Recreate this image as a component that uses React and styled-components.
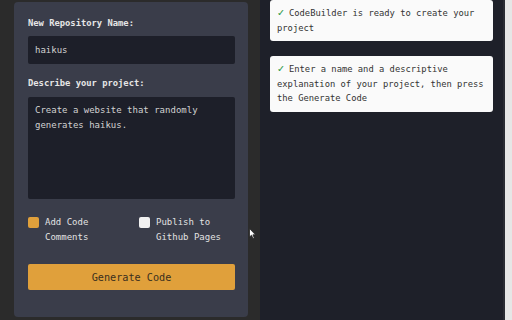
import React from 'react';
import styled, { createGlobalStyle } from 'styled-components';

const GlobalStyle = createGlobalStyle`
    html, body {
        margin: 0;
        padding: 0;
        width: 512px;
        height: 320px;
        overflow: hidden;
        background: #2b2b2b;
        font-family: "DejaVu Sans Mono", "Liberation Mono", monospace;
    }
`;

const Page = styled.div`
    position: relative;
    display: flex;
    width: 512px;
    height: 320px;
    padding-left: 14px;
    box-sizing: border-box;
    gap: 12px;
`;

const FormPanel = styled.div`
    width: 234px;
    margin: 2px 0 3px;
    padding: 14px 13px 0 14px;
    box-sizing: border-box;
    background: #3a3d4a;
    border-radius: 4px;
    display: flex;
    flex-direction: column;
`;

const Label = styled.label`
    font-size: 8.8px;
    line-height: 14px;
    font-weight: bold;
    color: #e6e6e6;
    margin-top: ${(p) => p.$top || 0}px;
`;

const fieldStyles = `
    width: 100%;
    box-sizing: border-box;
    border: none;
    outline: none;
    background: #1d1f29;
    color: #d2d2d2;
    font-family: "DejaVu Sans Mono", "Liberation Mono", monospace;
    font-size: 9px;
    border-radius: 2px;
    padding: 0 7px;
`;

const TextInput = styled.input`
    ${fieldStyles}
    height: 28px;
    margin-top: 6px;
`;

const TextArea = styled.textarea`
    ${fieldStyles}
    height: 102px;
    margin-top: 7px;
    padding-top: 6px;
    line-height: 15px;
    resize: none;
    overflow: hidden;
`;

const Options = styled.div`
    display: flex;
    margin-top: 16px;
`;

const Option = styled.div`
    display: flex;
    align-items: flex-start;
    gap: 6px;
    width: ${(p) => p.$width}px;
`;

const Box = styled.span`
    flex: none;
    width: 11px;
    height: 11px;
    margin-top: 2px;
    border-radius: 2px;
    background: ${(p) => (p.$checked ? '#e0a03b' : '#f1f1f1')};
`;

const OptionText = styled.span`
    width: 72px;
    font-size: 9px;
    line-height: 15px;
    color: #e2e2e2;
`;

const GenerateButton = styled.button`
    margin-top: 19px;
    height: 26px;
    width: 100%;
    border: none;
    border-radius: 2px;
    background: #e0a03b;
    color: #3a2f1e;
    font-family: "DejaVu Sans Mono", "Liberation Mono", monospace;
    font-size: 10.2px;
    cursor: pointer;
`;

const LogPanel = styled.div`
    flex: 1;
    display: flex;
    background: #1e2029;
`;

const Messages = styled.div`
    flex: 1;
    display: flex;
    flex-direction: column;
    gap: 15px;
    padding: 0 10px;
`;

const Card = styled.div`
    background: #fafafa;
    border-radius: 3px;
    padding: 6px 2px 6px 7px;
    font-size: 8.8px;
    line-height: 14.5px;
    color: #333;

    &::before {
        content: '✓';
        margin-right: 4px;
        color: #2e9a4a;
        font-family: "DejaVu Sans", sans-serif;
        font-weight: bold;
        font-size: 9.5px;
    }
`;

const Scrollbar = styled.div`
    width: 9px;
    background: #e6e6e6;
    border-left: 2px solid #2a2c33;
    box-sizing: border-box;
`;

const Pointer = styled.svg`
    position: absolute;
    left: 249px;
    top: 228px;
`;

const messages = [
    'CodeBuilder is ready to create your project',
    'Enter a name and a descriptive explanation of your project, then press the Generate Code',
];

export default function App() {
    return (
        <>
            <GlobalStyle />
            <Page>
                <FormPanel>
                    <Label>New Repository Name:</Label>
                    <TextInput defaultValue="haikus" />
                    <Label $top={12}>Describe your project:</Label>
                    <TextArea defaultValue="Create a website that randomly generates haikus." />
                    <Options>
                        <Option $width={111}>
                            <Box $checked />
                            <OptionText>Add Code Comments</OptionText>
                        </Option>
                        <Option $width={96}>
                            <Box />
                            <OptionText>Publish to Github Pages</OptionText>
                        </Option>
                    </Options>
                    <GenerateButton>Generate Code</GenerateButton>
                </FormPanel>
                <LogPanel>
                    <Messages>
                        {messages.map((m) => (
                            <Card key={m}>{m}</Card>
                        ))}
                    </Messages>
                    <Scrollbar />
                </LogPanel>
                <Pointer width="7" height="11" viewBox="0 0 7 11">
                    <path d="M0.5 0.5 L0.5 9 L2.5 7.2 L4 10.5 L5.3 9.9 L3.9 6.8 L6.5 6.8 Z" fill="#fff" stroke="#222" strokeWidth="0.8" />
                </Pointer>
            </Page>
        </>
    );
}
